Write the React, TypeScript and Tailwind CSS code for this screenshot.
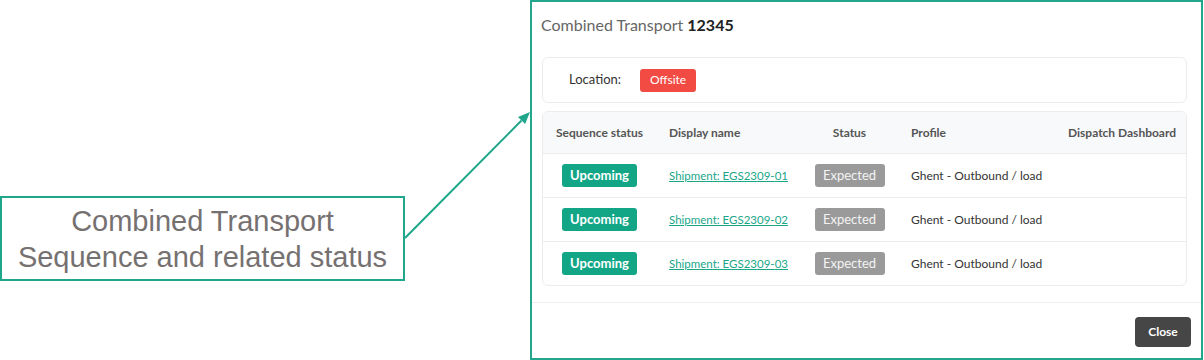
import React from "react";

const rows = ["01", "02", "03"];

export default function App() {
  return (
    <div className="relative flex h-[360px] w-[1204px] bg-white" style={{ fontFamily: "Lato, 'Noto Sans', sans-serif" }}>
      {/* annotation side */}
      <div className="flex w-[530px] flex-col pt-[196px]">
        <div
          className="flex h-[85px] w-[405px] flex-col items-center justify-center border-2 border-[#1fa68b] pt-[1px] text-center text-[29px] leading-[36px] text-[#767171]"
          style={{ fontFamily: "'Liberation Sans', Arial, sans-serif" }}
        >
          <div>Combined Transport</div>
          <div>Sequence and related status</div>
        </div>
      </div>

      {/* dialog */}
      <div className="flex h-[360px] w-[673px] flex-col border-2 border-[#22a78d] bg-white">
        <div className="flex h-[46px] items-center pl-[9px] text-[16px]">
          <span className="font-normal text-[#666]">Combined Transport</span>
          <span className="ml-[4px] font-bold text-[#222]">12345</span>
        </div>
        <div className="flex flex-col pl-[10px] pr-[14px]">
          <div className="mt-[9px] flex h-[46px] items-center rounded-[6px] border border-[#ececec] pl-[26px]">
            <span className="text-[13px] text-[#333]">Location:</span>
            <span className="ml-[19px] flex h-[23px] w-[56px] items-center justify-center rounded-[3px] bg-[#f14b44] text-[12px] text-white">
              Offsite
            </span>
          </div>
          <div className="mt-[8px] overflow-hidden rounded-[6px] border border-[#ececec]">
            <div className="grid h-[41px] grid-cols-[113px_145px_97px_157px_1fr] items-center bg-[#f8f9fa] text-[12px] font-bold text-[#555]">
              <div className="text-center">Sequence status</div>
              <div className="pl-[13px]">Display name</div>
              <div className="text-center">Status</div>
              <div className="pl-[13px]">Profile</div>
              <div className="pl-[13px]">Dispatch Dashboard</div>
            </div>
            {rows.map((r) => (
              <div
                key={r}
                className="grid h-[44px] grid-cols-[113px_145px_97px_157px_1fr] items-center border-t border-[#ececec] text-[12px]"
              >
                <div className="flex justify-center">
                  <span className="flex h-[23px] w-[75px] items-center justify-center rounded-[3px] bg-[#12a687] text-[13px] font-bold text-white">
                    Upcoming
                  </span>
                </div>
                <div className="pl-[13px]">
                  <span className="text-[11.5px] text-[#1ba68a] underline">Shipment: EGS2309-{r}</span>
                </div>
                <div className="flex justify-center">
                  <span className="flex h-[23px] w-[70px] items-center justify-center rounded-[3px] bg-[#9a9a9a] text-[13px] text-[#f4f4f4]">
                    Expected
                  </span>
                </div>
                <div className="pl-[13px] text-[#333]">Ghent - Outbound / load</div>
                <div />
              </div>
            ))}
          </div>
        </div>
        <div className="mt-[16px] flex flex-1 justify-end border-t border-[#eeeeee] pr-[10px] pt-[14px]">
          <button className="flex h-[30px] w-[56px] items-center justify-center rounded-[4px] bg-[#464646] text-[12px] font-bold text-white">
            Close
          </button>
        </div>
      </div>

      {/* arrow */}
      <svg className="pointer-events-none absolute left-0 top-0" width="1204" height="360">
        <line x1="405" y1="238" x2="521.5" y2="120.5" stroke="#1fa68b" strokeWidth="2" />
        <polygon points="530,112 525.1,124 518,117" fill="#1fa68b" />
      </svg>
    </div>
  );
}
